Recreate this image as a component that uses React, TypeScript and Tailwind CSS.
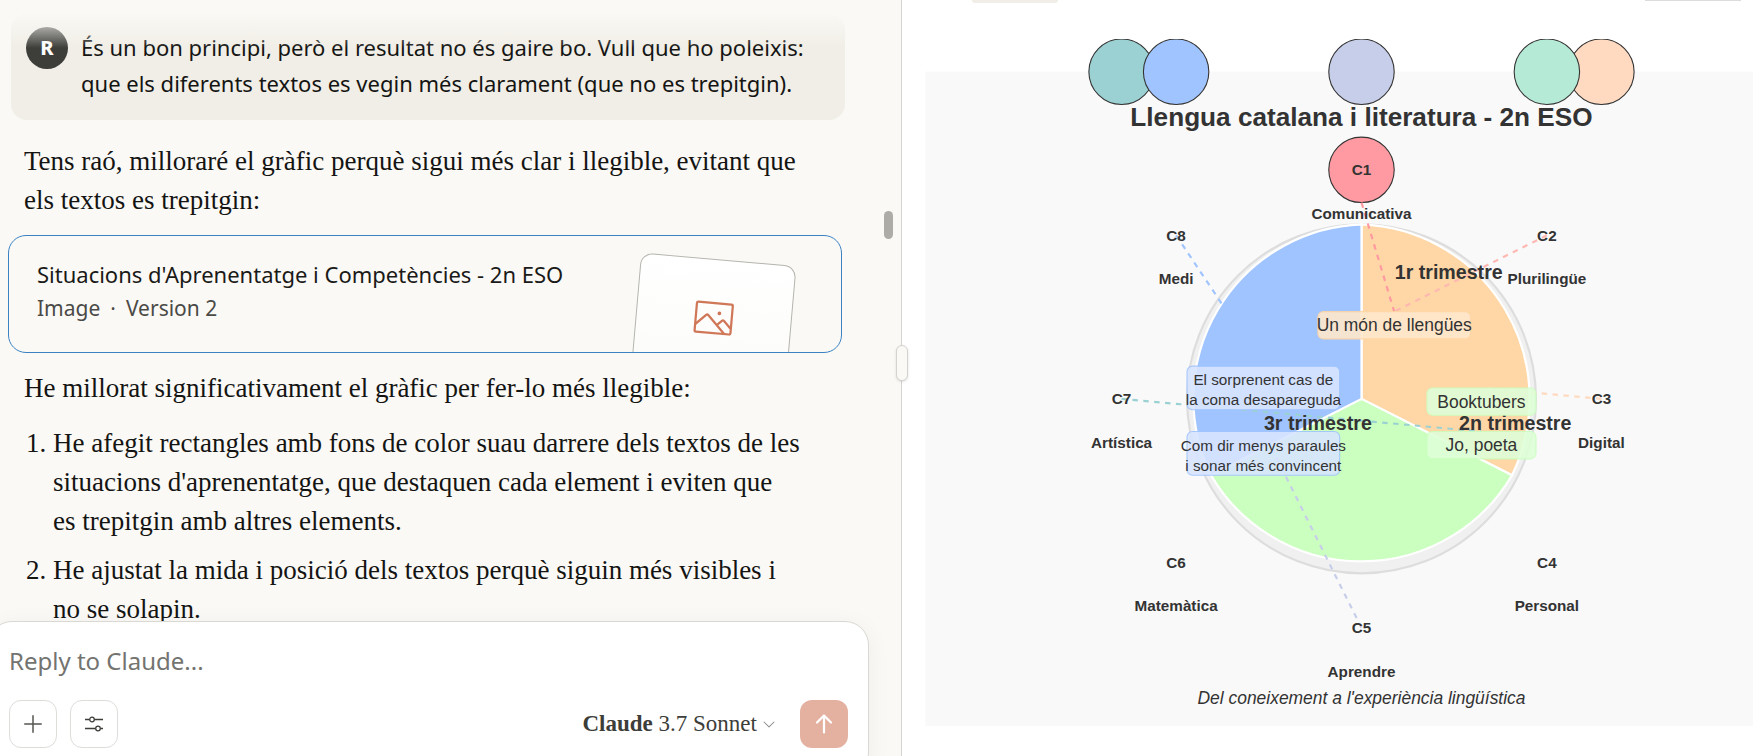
import { PiCaretDown, PiImageLight, PiPlus } from "react-icons/pi";

const SANS = "font-['Noto_Sans','Open_Sans',sans-serif]";
const SERIF = "font-['Liberation_Serif',serif]";

const competencies = [
  { code: "C1", name: "Comunicativa", x: 400, y: 90 },
  { code: "C2", name: "Plurilingüe", x: 570, y: 150 },
  { code: "C3", name: "Digital", x: 620, y: 300 },
  { code: "C4", name: "Personal", x: 570, y: 450 },
  { code: "C5", name: "Aprendre", x: 400, y: 510 },
  { code: "C6", name: "Matemàtica", x: 230, y: 450 },
  { code: "C7", name: "Artística", x: 180, y: 300 },
  { code: "C8", name: "Medi", x: 230, y: 150 },
];

const discs = [
  { x: 400, y: 90, fill: "#ff9aa2" },
  { x: 620, y: 0, fill: "#ffdac1" },
  { x: 570, y: 0, fill: "#b5ead7" },
  { x: 400, y: 0, fill: "#c7ceea" },
  { x: 180, y: 0, fill: "#9bd1d3" },
  { x: 230, y: 0, fill: "#a0c4ff" },
];

const links = [
  { x1: 400, y1: 120, x2: 430, y2: 220, color: "#ff9aa2" },
  { x1: 570, y1: 150, x2: 430, y2: 220, color: "#ffb7b2" },
  { x1: 620, y1: 300, x2: 510, y2: 290, color: "#ffdac1" },
  { x1: 400, y1: 510, x2: 310, y2: 330, color: "#c7ceea" },
  { x1: 180, y1: 300, x2: 510, y2: 330, color: "#9bd1d3" },
  { x1: 230, y1: 150, x2: 310, y2: 270, color: "#a0c4ff" },
];

const situations = [
  { x: 360, y: 220, w: 140, h: 25, fill: "#ffe8cc", stroke: "#ffd6a5", size: 16, lines: [["Un món de llengües", 238]] },
  { x: 460, y: 290, w: 100, h: 25, fill: "#dfffd8", stroke: "#caffbf", size: 16, lines: [["Booktubers", 308]] },
  { x: 460, y: 330, w: 100, h: 25, fill: "#dfffd8", stroke: "#caffbf", size: 16, lines: [["Jo, poeta", 348]] },
  { x: 240, y: 270, w: 140, h: 40, fill: "#d8e5ff", stroke: "#a0c4ff", size: 14, lines: [["El sorprenent cas de", 287], ["la coma desapareguda", 306]] },
  { x: 240, y: 330, w: 140, h: 40, fill: "#d8e5ff", stroke: "#a0c4ff", size: 14, lines: [["Com dir menys paraules", 348], ["i sonar més convincent", 366]] },
] as const;

function CompetencyChart() {
  return (
    <svg
      viewBox="0 -30 800 630"
      className="block h-[687px] w-[873px] shrink-0 font-['Liberation_Sans',Arial,sans-serif]"
      textAnchor="middle"
      fill="#333"
      role="img"
      aria-label="Llengua catalana i literatura - 2n ESO"
    >
      <rect x="0" y="0" width="800" height="600" fill="#f9f9f9" />
      <text x="400" y="50" fontSize="24" fontWeight="bold">Llengua catalana i literatura - 2n ESO</text>
      <circle cx="400" cy="300" r="160" fill="#f0f0f0" stroke="#ddd" strokeWidth="2" />
      <g stroke="#fff" strokeWidth="2">
        <path d="M400,300 L400,140 A160,160 0 0,1 538,370 Z" fill="#ffd6a5" />
        <path d="M400,300 L538,370 A160,160 0 0,1 262,370 Z" fill="#caffbf" />
        <path d="M400,300 L262,370 A160,160 0 0,1 400,140 Z" fill="#a0c4ff" />
      </g>
      {discs.map((d) => (
        <circle key={d.fill} cx={d.x} cy={d.y} r="30" fill={d.fill} stroke="#333" strokeWidth="1" />
      ))}
      <g strokeWidth="2" strokeDasharray="5,5">
        {links.map((l) => (
          <line key={l.color} x1={l.x1} y1={l.y1} x2={l.x2} y2={l.y2} stroke={l.color} />
        ))}
      </g>
      <g fontSize="18" fontWeight="bold">
        <text x="480" y="190">1r trimestre</text>
        <text x="541" y="329">2n trimestre</text>
        <text x="360" y="329">3r trimestre</text>
      </g>
      <g fontSize="14" fontWeight="bold">
        {competencies.map((c) => (
          <g key={c.code}>
            <text x={c.x} y={c.y + 5}>{c.code}</text>
            <text x={c.x} y={c.y + 45}>{c.name}</text>
          </g>
        ))}
      </g>
      {situations.map((s) => (
        <g key={s.lines[0][0]}>
          <rect x={s.x} y={s.y} width={s.w} height={s.h} rx="5" fill={s.fill} stroke={s.stroke} opacity="0.9" />
          {s.lines.map(([text, y]) => (
            <text key={text} x={s.x + s.w / 2} y={y} fontSize={s.size}>{text}</text>
          ))}
        </g>
      ))}
      <text x="400" y="580" fontSize="16" fontStyle="italic">Del coneixement a l'experiència lingüística</text>
    </svg>
  );
}

function SlidersIcon() {
  return (
    <svg viewBox="0 0 20 20" className="size-5" fill="none" stroke="currentColor" strokeWidth="1.3" aria-hidden="true">
      <path d="M1 5.500H5.500M10.500 5.500H19M1 14.500H11.500M16.500 14.500H19" />
      <circle cx="8" cy="5.500" r="2.300" />
      <circle cx="14" cy="14.500" r="2.300" />
    </svg>
  );
}

function SendIcon() {
  return (
    <svg viewBox="0 0 24 24" className="size-6" fill="none" stroke="currentColor" strokeWidth="2.200" strokeLinecap="round" strokeLinejoin="round" aria-hidden="true">
      <path d="M12 20.500V3.500M5 10.500L12 3.500L19 10.500" />
    </svg>
  );
}

function ArtifactCard() {
  return (
    <button
      type="button"
      className={`flex h-[118px] w-full justify-between overflow-hidden rounded-[18px] border border-[#3b82c4] pl-7 pr-[52px] text-left ${SANS}`}
    >
      <span className="flex flex-col pt-[22px]">
        <span className="text-[22px] leading-8 text-[#1a1a18]">Situacions d'Aprenentatge i Competències - 2n ESO</span>
        <span className="flex gap-2.5 text-[21px] leading-9 text-[#4a4a47]">
          <span>Image</span>
          <span>·</span>
          <span>Version 2</span>
        </span>
      </span>
      <span className="mt-[23px] flex h-[180px] w-[156px] shrink-0 rotate-5 justify-center rounded-xl border border-[#b5b5b0] bg-linear-to-b from-white to-[#faf9f5] pt-[34px] text-[#d07757]">
        <PiImageLight className="size-12" />
      </span>
    </button>
  );
}

function Conversation() {
  return (
    <main className="relative min-h-0 flex-1 overflow-hidden">
      <div className="flex flex-col pr-[59px] pl-2">
        <div className="mt-3.5 -mr-[3px] ml-[3px] flex min-h-[106px] gap-[13px] rounded-2xl bg-[#f0eee6] px-[15px] pt-[13px]">
          <div className={`flex size-[42px] shrink-0 items-center justify-center rounded-full bg-[#3d3d3a] text-xl font-extrabold text-white ${SANS}`}>R</div>
          <p className={`pt-0.5 text-[22px] leading-9 whitespace-nowrap text-[#141413] ${SANS}`}>
            És un bon principi, però el resultat no és gaire bo. Vull que ho poleixis:
            <br />
            que els diferents textos es vegin més clarament (que no es trepitgin).
          </p>
        </div>
        <div className={`text-[27px] leading-[39px] whitespace-nowrap text-[#141413] ${SERIF}`}>
          <p className="mt-[22px] mb-[15px] pl-4">
            Tens raó, milloraré el gràfic perquè sigui més clar i llegible, evitant que
            <br />
            els textos es trepitgin:
          </p>
          <ArtifactCard />
          <p className="mt-4 pl-4">He millorat significativament el gràfic per fer-lo més llegible:</p>
          <ol className="mt-4 flex list-decimal flex-col gap-2.5 pl-[45px]">
            <li>
              He afegit rectangles amb fons de color suau darrere dels textos de les
              <br />
              situacions d'aprenentatge, que destaquen cada element i eviten que
              <br />
              es trepitgin amb altres elements.
            </li>
            <li>
              He ajustat la mida i posició dels textos perquè siguin més visibles i
              <br />
              no se solapin.
            </li>
          </ol>
        </div>
      </div>
      <div className="pointer-events-none absolute inset-x-0 top-0 h-12 bg-linear-to-b from-[#faf9f5] from-25% to-transparent" />
      <div className="absolute top-[211px] right-2 h-7 w-[9px] rounded-full bg-[#adaca7]" />
    </main>
  );
}

function Composer() {
  return (
    <form className="-mb-5 -ml-3 mr-8 flex h-[155px] shrink-0 flex-col rounded-3xl border border-[#d9d8d2] bg-white px-5 shadow-[0_4px_24px_rgba(0,0,0,0.05)]">
      <input
        type="text"
        aria-label="Reply to Claude"
        placeholder="Reply to Claude..."
        className={`mt-[18px] h-10 w-full text-2xl text-[#141413] outline-none placeholder:text-[#737370] ${SANS}`}
      />
      <div className="mt-5 flex items-center gap-[13px]">
        <button type="button" aria-label="Add content" className="flex size-12 items-center justify-center rounded-xl border border-[#deddd9] text-[#555552]">
          <PiPlus className="size-6" />
        </button>
        <button type="button" aria-label="Tools" className="flex size-12 items-center justify-center rounded-xl border border-[#deddd9] text-[#3d3d3a]">
          <SlidersIcon />
        </button>
        <button type="button" className={`mr-2.5 ml-auto flex items-center gap-1 text-[23px] text-[#3d3d3a] ${SERIF}`}>
          <span>
            <span className="font-bold">Claude</span> 3.7 Sonnet
          </span>
          <PiCaretDown className="size-4 text-[#8a8a86]" />
        </button>
        <button type="submit" aria-label="Send message" className="flex size-12 items-center justify-center rounded-xl bg-[#e4b1a0] text-white">
          <SendIcon />
        </button>
      </div>
    </form>
  );
}

export default function App() {
  return (
    <div className="flex h-screen overflow-hidden bg-white">
      <section className="relative flex w-[51.45%] shrink-0 flex-col border-r border-[#d4d3ce] bg-[#faf9f5]">
        <Conversation />
        <Composer />
        <div className="absolute top-[345px] -right-[7px] z-10 h-9 w-3 rounded-full border border-[#d4d3ce] bg-[#faf9f5] shadow-sm" />
      </section>
      <section className="min-w-0 flex-1 overflow-hidden">
        <div className="flex h-[39px] items-start justify-between pr-3 pl-[70px]">
          <div className="h-[3px] w-[86px] rounded-b-lg bg-[#f0eee6]" />
          <div className="h-px w-24 bg-[#dcdcda]" />
        </div>
        <div className="flex pl-[23px]">
          <CompetencyChart />
        </div>
      </section>
    </div>
  );
}
